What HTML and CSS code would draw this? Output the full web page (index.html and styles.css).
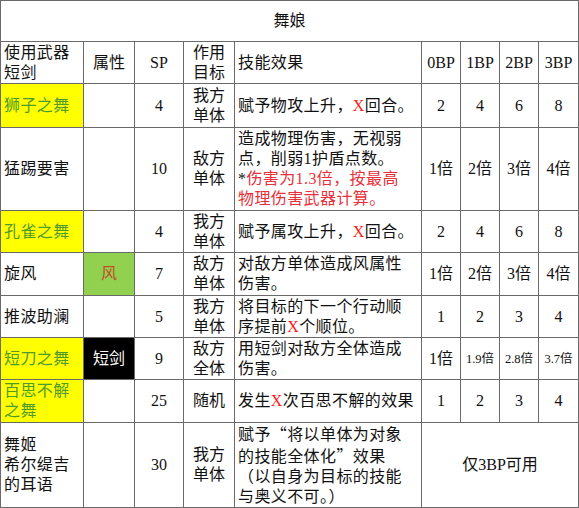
FILE: index.html
```html
<!DOCTYPE html>
<html lang="zh-CN">
<head>
<meta charset="utf-8">
<title>舞娘</title>
<link rel="stylesheet" href="styles.css">
</head>
<body>
<table class="skills">
  <colgroup>
    <col class="w-name"><col class="w-attr"><col class="w-sp"><col class="w-tgt"><col class="w-eff">
    <col class="w-bp"><col class="w-bp"><col class="w-bp"><col class="w-bp4">
  </colgroup>
  <tr class="h41"><td colspan="9" class="c title">舞娘</td></tr>
  <tr class="h42">
    <td class="l">使用武器<br>短剑</td>
    <td class="c">属性</td>
    <td class="c">SP</td>
    <td class="c">作用<br>目标</td>
    <td class="l">技能效果</td>
    <td class="c">0BP</td><td class="c">1BP</td><td class="c">2BP</td><td class="c">3BP</td>
  </tr>
  <tr class="h44">
    <td class="l hl">狮子之舞</td>
    <td></td>
    <td class="c">4</td>
    <td class="c">我方<br>单体</td>
    <td class="l">赋予物攻上升，<span class="x">X</span>回合。</td>
    <td class="c">2</td><td class="c">4</td><td class="c">6</td><td class="c">8</td>
  </tr>
  <tr class="h83">
    <td class="l">猛踢要害</td>
    <td></td>
    <td class="c">10</td>
    <td class="c">敌方<br>单体</td>
    <td class="l">造成物理伤害，无视弱<br>点，削弱1护盾点数。<br>*<span class="red">伤害为1.3倍，按最高<br>物理伤害武器计算。</span></td>
    <td class="c">1倍</td><td class="c">2倍</td><td class="c">3倍</td><td class="c">4倍</td>
  </tr>
  <tr class="h42">
    <td class="l hl">孔雀之舞</td>
    <td></td>
    <td class="c">4</td>
    <td class="c">我方<br>单体</td>
    <td class="l">赋予属攻上升，<span class="x">X</span>回合。</td>
    <td class="c">2</td><td class="c">4</td><td class="c">6</td><td class="c">8</td>
  </tr>
  <tr class="h43">
    <td class="l">旋风</td>
    <td class="c wind">风</td>
    <td class="c">7</td>
    <td class="c">敌方<br>单体</td>
    <td class="l">对敌方单体造成风属性<br>伤害。</td>
    <td class="c">1倍</td><td class="c">2倍</td><td class="c">3倍</td><td class="c">4倍</td>
  </tr>
  <tr class="h42">
    <td class="l">推波助澜</td>
    <td></td>
    <td class="c">5</td>
    <td class="c">我方<br>单体</td>
    <td class="l">将目标的下一个行动顺<br>序提前<span class="x">X</span>个顺位。</td>
    <td class="c">1</td><td class="c">2</td><td class="c">3</td><td class="c">4</td>
  </tr>
  <tr class="h42">
    <td class="l hl">短刀之舞</td>
    <td class="c blade">短剑</td>
    <td class="c">9</td>
    <td class="c">敌方<br>全体</td>
    <td class="l">用短剑对敌方全体造成<br>伤害。</td>
    <td class="c">1倍</td><td class="c sm">1.9倍</td><td class="c sm">2.8倍</td><td class="c sm">3.7倍</td>
  </tr>
  <tr class="h43">
    <td class="l hl">百思不解<br>之舞</td>
    <td></td>
    <td class="c">25</td>
    <td class="c">随机</td>
    <td class="l">发生<span class="x">X</span>次百思不解的效果</td>
    <td class="c">1</td><td class="c">2</td><td class="c">3</td><td class="c">4</td>
  </tr>
  <tr class="h84">
    <td class="l">舞姬<br>希尔缇吉<br>的耳语</td>
    <td></td>
    <td class="c">30</td>
    <td class="c">我方<br>单体</td>
    <td class="l">赋予<span class="cjk">“</span>将以单体为对象<br>的技能全体化<span class="cjk">”</span>效果<br>（以自身为目标的技能<br>与奥义不可。）</td>
    <td colspan="4" class="c">仅3BP可用</td>
  </tr>
</table>
</body>
</html>
```

FILE: styles.css
```css
html, body {
  margin: 0;
  padding: 0;
  background: #ffffff;
}

.skills {
  border-collapse: collapse;
  table-layout: fixed;
  width: 578px;
  font-family: "Liberation Serif", "Noto Sans CJK SC", serif;
  font-size: 16px;
  line-height: 20px;
  color: #111111;
  border: 1px solid #555555;
}

.w-name { width: 83px; }
.w-attr { width: 51px; }
.w-sp { width: 49px; }
.w-tgt { width: 51px; }
.w-eff { width: 187px; }
.w-bp { width: 39px; }
.w-bp4 { width: 40px; }

.skills td {
  border: 1px solid #6a6a6a;
  padding: 0 2px 0 3px;
  vertical-align: middle;
  white-space: nowrap;
  overflow: hidden;
  letter-spacing: 0.4px;
}

.h41 { height: 41px; }
.h42 { height: 42px; }
.h43 { height: 43px; }
.h44 { height: 44px; }
.h83 { height: 83px; }
.h84 { height: 84px; }

.c { text-align: center; }
.l { text-align: left; }

.skills td.c { padding: 0; letter-spacing: 0; }

.title { letter-spacing: 0; }

.cjk { font-family: "Noto Sans CJK SC", sans-serif; }

.hl {
  background: #ffff00;
  color: #4f9a2c;
}

.wind {
  background: #92d050;
  color: #c0502a;
}

.blade {
  background: #000000;
  color: #ffffff;
}

.x { color: #ff1a1a; }
.red { color: #e8303a; }

.skills td.sm { font-size: 12.5px; }
```
